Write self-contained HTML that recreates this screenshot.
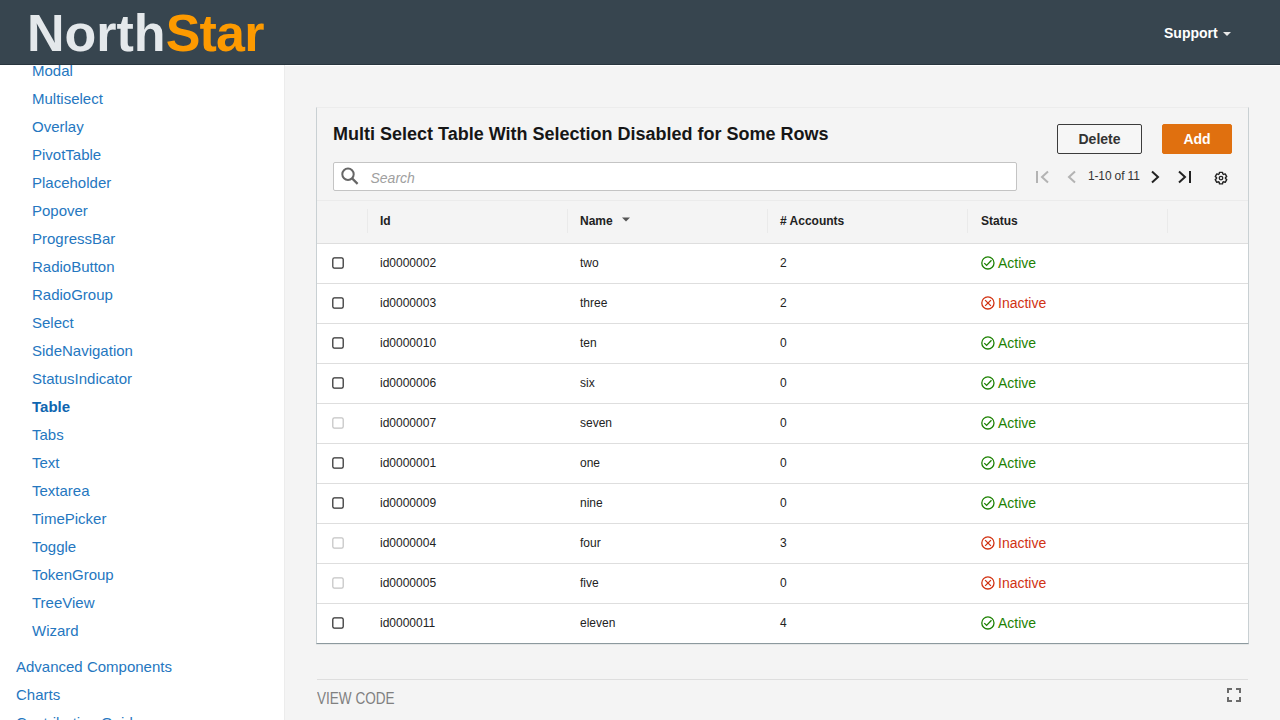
<!DOCTYPE html>
<html><head><meta charset="utf-8">
<style>
*{box-sizing:border-box;margin:0;padding:0}
html,body{width:1280px;height:720px;overflow:hidden;background:#f4f4f4;font-family:"Liberation Sans",sans-serif}
#hdr{position:absolute;left:0;top:0;width:1280px;height:65px;background:#37454f;border-bottom:1px solid #28353e}
#logo{position:absolute;left:27px;top:4px;font-size:52px;font-weight:bold;line-height:58px;white-space:nowrap;letter-spacing:0px}
#logo .n{color:#e4e8eb}#logo .s{color:#fd9a00;letter-spacing:-0.8px}
#support{position:absolute;left:1164px;top:25px;color:#fff;font-weight:bold;font-size:14px;line-height:16px}
#caret{position:absolute;left:1223px;top:32px;width:0;height:0;border-left:4px solid transparent;border-right:4px solid transparent;border-top:4px solid #e8e8e8}
#white{position:absolute;left:0;top:65px;width:1280px;height:1px;background:#fff}
#side{position:absolute;left:0;top:65px;width:285px;height:655px;background:#fff;border-right:1px solid #ececec;overflow:hidden}
.si{position:absolute;font-size:15px;line-height:18px;color:#2577bf;white-space:nowrap}
.si.b{font-weight:bold;color:#0f66b0}
#card{position:absolute;left:316px;top:107px;width:933px;height:537px;background:#f4f4f4;border-left:1px solid #c9d0d3;border-right:1px solid #c9d0d3;border-top:1px solid #ececec;border-bottom:1px solid #8c999e;box-shadow:0 1px 0 0 rgba(0,28,36,.06);overflow:hidden}
#title{position:absolute;left:16px;top:15px;font-size:18px;font-weight:bold;color:#161616;line-height:22px;white-space:nowrap}
.btn{position:absolute;top:16px;height:30px;font-size:14px;font-weight:bold;line-height:28px;text-align:center;border-radius:2px}
#del{left:740px;width:85px;border:1px solid #3c3c3c;color:#333;background:#f6f6f6}
#add{left:845px;width:70px;background:#e0700f;color:#fff;border:1px solid #e0700f}
#search{position:absolute;left:16px;top:54px;width:684px;height:29px;background:#fff;border:1px solid #c4c4c4;border-radius:2px}
#search .ph{position:absolute;left:36.5px;top:7px;font-size:14px;font-style:italic;color:#a0a0a0;line-height:16px}
#pg{position:absolute;left:771px;top:61px;font-size:12px;color:#333;line-height:14px;letter-spacing:-0.15px}
#thead{position:absolute;left:0;top:92px;width:931px;height:44px;border-top:1px solid #ebebeb;border-bottom:1px solid #dedede;background:#f4f4f4}
.th{position:absolute;top:13px;font-size:12px;font-weight:bold;color:#222;line-height:14px}
.vd{position:absolute;top:8px;width:1px;height:24px;background:#eaeaea}
.row{position:absolute;left:0;width:931px;height:40px;background:#fff;border-bottom:1px solid #dedede}
.td{position:absolute;top:12px;font-size:12px;color:#222;line-height:14px;white-space:nowrap}
.cb{position:absolute;left:15px;top:13px;width:12px;height:12px}
.cb rect{fill:#fff;stroke:#2e2e2e;stroke-width:1.25}
.cb.dis rect{stroke:#c4c4c4}
.st{position:absolute;left:664px;top:12px;font-size:14px;line-height:16px;white-space:nowrap}
.st svg{position:absolute;left:0;top:0px}
.st span{position:absolute;left:17px;top:-1px}
.act{color:#1d8102}.ina{color:#d13212}
#vline{position:absolute;left:317px;top:679px;width:931px;height:1px;background:#dedede}
#vc{position:absolute;left:317px;top:690px;font-size:16px;color:#808080;line-height:18px;transform:scaleX(0.848);transform-origin:0 0}
</style></head><body>
<div id="hdr">
  <div id="logo"><span class="n">North</span><span class="s">Star</span></div>
  <div id="support">Support</div><div id="caret"></div>
</div>
<div id="white"></div>
<div id="side">
  <div class="si" style="left:32px;top:-3px">Modal</div>
  <div class="si" style="left:32px;top:25px">Multiselect</div>
  <div class="si" style="left:32px;top:53px">Overlay</div>
  <div class="si" style="left:32px;top:81px">PivotTable</div>
  <div class="si" style="left:32px;top:109px">Placeholder</div>
  <div class="si" style="left:32px;top:137px">Popover</div>
  <div class="si" style="left:32px;top:165px">ProgressBar</div>
  <div class="si" style="left:32px;top:193px">RadioButton</div>
  <div class="si" style="left:32px;top:221px">RadioGroup</div>
  <div class="si" style="left:32px;top:249px">Select</div>
  <div class="si" style="left:32px;top:277px">SideNavigation</div>
  <div class="si" style="left:32px;top:305px">StatusIndicator</div>
  <div class="si b" style="left:32px;top:333px">Table</div>
  <div class="si" style="left:32px;top:361px">Tabs</div>
  <div class="si" style="left:32px;top:389px">Text</div>
  <div class="si" style="left:32px;top:417px">Textarea</div>
  <div class="si" style="left:32px;top:445px">TimePicker</div>
  <div class="si" style="left:32px;top:473px">Toggle</div>
  <div class="si" style="left:32px;top:501px">TokenGroup</div>
  <div class="si" style="left:32px;top:529px">TreeView</div>
  <div class="si" style="left:32px;top:557px">Wizard</div>
  <div class="si" style="left:16px;top:593px">Advanced Components</div>
  <div class="si" style="left:16px;top:621px">Charts</div>
  <div class="si" style="left:16px;top:649px">Contribution Guide</div>
</div>
<div id="card">
  <div id="title">Multi Select Table With Selection Disabled for Some Rows</div>
  <div id="del" class="btn">Delete</div>
  <div id="add" class="btn">Add</div>
  <div id="search">
    <svg style="position:absolute;left:7px;top:4px" width="19" height="19" viewBox="0 0 19 19"><circle cx="7" cy="7.3" r="5.7" fill="none" stroke="#666" stroke-width="2"/><line x1="11.1" y1="11.4" x2="16.6" y2="16.9" stroke="#666" stroke-width="2.2"/></svg>
    <div class="ph">Search</div>
  </div>
  <div id="pg">1-10 of 11</div>
  <div id="thead">
    <div class="vd" style="left:50px"></div>
    <div class="th" style="left:63px">Id</div>
    <div class="vd" style="left:250px"></div>
    <div class="th" style="left:263px">Name</div>
    <div class="vd" style="left:450px"></div>
    <div class="th" style="left:463px"># Accounts</div>
    <div class="vd" style="left:650px"></div>
    <div class="th" style="left:664px">Status</div>
    <div class="vd" style="left:850px"></div>
  </div>
  <div class="row" style="top:136px"><svg class="cb" viewBox="0 0 12 12"><rect x="0.8" y="0.8" width="10.4" height="10.4" rx="1.6"/></svg><div class="td" style="left:63px">id0000002</div><div class="td" style="left:263px">two</div><div class="td" style="left:463px">2</div><div class="st act"><svg width="14" height="14" viewBox="0 0 14 14"><circle cx="6.9" cy="6.9" r="6.1" fill="none" stroke="#1d8102" stroke-width="1.3"/><path d="M3.3 7.1L5.6 9.4L10.5 4.3" fill="none" stroke="#1d8102" stroke-width="1.3"/></svg><span>Active</span></div></div>
  <div class="row" style="top:176px"><svg class="cb" viewBox="0 0 12 12"><rect x="0.8" y="0.8" width="10.4" height="10.4" rx="1.6"/></svg><div class="td" style="left:63px">id0000003</div><div class="td" style="left:263px">three</div><div class="td" style="left:463px">2</div><div class="st ina"><svg width="14" height="14" viewBox="0 0 14 14"><circle cx="6.9" cy="6.9" r="6.1" fill="none" stroke="#d13212" stroke-width="1.3"/><path d="M4.1 4.1L9.9 9.9M9.9 4.1L4.1 9.9" fill="none" stroke="#d13212" stroke-width="1.3"/></svg><span>Inactive</span></div></div>
  <div class="row" style="top:216px"><svg class="cb" viewBox="0 0 12 12"><rect x="0.8" y="0.8" width="10.4" height="10.4" rx="1.6"/></svg><div class="td" style="left:63px">id0000010</div><div class="td" style="left:263px">ten</div><div class="td" style="left:463px">0</div><div class="st act"><svg width="14" height="14" viewBox="0 0 14 14"><circle cx="6.9" cy="6.9" r="6.1" fill="none" stroke="#1d8102" stroke-width="1.3"/><path d="M3.3 7.1L5.6 9.4L10.5 4.3" fill="none" stroke="#1d8102" stroke-width="1.3"/></svg><span>Active</span></div></div>
  <div class="row" style="top:256px"><svg class="cb" viewBox="0 0 12 12"><rect x="0.8" y="0.8" width="10.4" height="10.4" rx="1.6"/></svg><div class="td" style="left:63px">id0000006</div><div class="td" style="left:263px">six</div><div class="td" style="left:463px">0</div><div class="st act"><svg width="14" height="14" viewBox="0 0 14 14"><circle cx="6.9" cy="6.9" r="6.1" fill="none" stroke="#1d8102" stroke-width="1.3"/><path d="M3.3 7.1L5.6 9.4L10.5 4.3" fill="none" stroke="#1d8102" stroke-width="1.3"/></svg><span>Active</span></div></div>
  <div class="row" style="top:296px"><svg class="cb dis" viewBox="0 0 12 12"><rect x="0.8" y="0.8" width="10.4" height="10.4" rx="1.6"/></svg><div class="td" style="left:63px">id0000007</div><div class="td" style="left:263px">seven</div><div class="td" style="left:463px">0</div><div class="st act"><svg width="14" height="14" viewBox="0 0 14 14"><circle cx="6.9" cy="6.9" r="6.1" fill="none" stroke="#1d8102" stroke-width="1.3"/><path d="M3.3 7.1L5.6 9.4L10.5 4.3" fill="none" stroke="#1d8102" stroke-width="1.3"/></svg><span>Active</span></div></div>
  <div class="row" style="top:336px"><svg class="cb" viewBox="0 0 12 12"><rect x="0.8" y="0.8" width="10.4" height="10.4" rx="1.6"/></svg><div class="td" style="left:63px">id0000001</div><div class="td" style="left:263px">one</div><div class="td" style="left:463px">0</div><div class="st act"><svg width="14" height="14" viewBox="0 0 14 14"><circle cx="6.9" cy="6.9" r="6.1" fill="none" stroke="#1d8102" stroke-width="1.3"/><path d="M3.3 7.1L5.6 9.4L10.5 4.3" fill="none" stroke="#1d8102" stroke-width="1.3"/></svg><span>Active</span></div></div>
  <div class="row" style="top:376px"><svg class="cb" viewBox="0 0 12 12"><rect x="0.8" y="0.8" width="10.4" height="10.4" rx="1.6"/></svg><div class="td" style="left:63px">id0000009</div><div class="td" style="left:263px">nine</div><div class="td" style="left:463px">0</div><div class="st act"><svg width="14" height="14" viewBox="0 0 14 14"><circle cx="6.9" cy="6.9" r="6.1" fill="none" stroke="#1d8102" stroke-width="1.3"/><path d="M3.3 7.1L5.6 9.4L10.5 4.3" fill="none" stroke="#1d8102" stroke-width="1.3"/></svg><span>Active</span></div></div>
  <div class="row" style="top:416px"><svg class="cb dis" viewBox="0 0 12 12"><rect x="0.8" y="0.8" width="10.4" height="10.4" rx="1.6"/></svg><div class="td" style="left:63px">id0000004</div><div class="td" style="left:263px">four</div><div class="td" style="left:463px">3</div><div class="st ina"><svg width="14" height="14" viewBox="0 0 14 14"><circle cx="6.9" cy="6.9" r="6.1" fill="none" stroke="#d13212" stroke-width="1.3"/><path d="M4.1 4.1L9.9 9.9M9.9 4.1L4.1 9.9" fill="none" stroke="#d13212" stroke-width="1.3"/></svg><span>Inactive</span></div></div>
  <div class="row" style="top:456px"><svg class="cb dis" viewBox="0 0 12 12"><rect x="0.8" y="0.8" width="10.4" height="10.4" rx="1.6"/></svg><div class="td" style="left:63px">id0000005</div><div class="td" style="left:263px">five</div><div class="td" style="left:463px">0</div><div class="st ina"><svg width="14" height="14" viewBox="0 0 14 14"><circle cx="6.9" cy="6.9" r="6.1" fill="none" stroke="#d13212" stroke-width="1.3"/><path d="M4.1 4.1L9.9 9.9M9.9 4.1L4.1 9.9" fill="none" stroke="#d13212" stroke-width="1.3"/></svg><span>Inactive</span></div></div>
  <div class="row" style="top:496px"><svg class="cb" viewBox="0 0 12 12"><rect x="0.8" y="0.8" width="10.4" height="10.4" rx="1.6"/></svg><div class="td" style="left:63px">id0000011</div><div class="td" style="left:263px">eleven</div><div class="td" style="left:463px">4</div><div class="st act"><svg width="14" height="14" viewBox="0 0 14 14"><circle cx="6.9" cy="6.9" r="6.1" fill="none" stroke="#1d8102" stroke-width="1.3"/><path d="M3.3 7.1L5.6 9.4L10.5 4.3" fill="none" stroke="#1d8102" stroke-width="1.3"/></svg><span>Active</span></div></div>
</div>
<div id="vline"></div>
<div id="vc">VIEW CODE</div>
<svg id="pgicons" style="position:absolute;left:0;top:0" width="1280" height="720" viewBox="0 0 1280 720">
<g fill="none" stroke-width="2" stroke-linecap="butt" stroke-linejoin="miter">
<path d="M1037 171V183" stroke="#b3b3b3"/>
<path d="M1048 171.5L1042 177L1048 182.5" stroke="#b3b3b3"/>
<path d="M1075 171.5L1069 177L1075 182.5" stroke="#b3b3b3"/>
<path d="M1152 171.5L1158 177L1152 182.5" stroke="#222"/>
<path d="M1179 171.5L1185 177L1179 182.5" stroke="#222"/>
<path d="M1190 171V183" stroke="#222"/>
<path transform="translate(1221 178.1)" d="M-1.83 -4.11 L-1.54 -5.75 L1.54 -5.75 L1.83 -4.11 L2.65 -3.64 L4.21 -4.21 L5.75 -1.54 L4.48 -0.47 L4.48 0.47 L5.75 1.54 L4.21 4.21 L2.65 3.64 L1.83 4.11 L1.54 5.75 L-1.54 5.75 L-1.83 4.11 L-2.65 3.64 L-4.21 4.21 L-5.75 1.54 L-4.48 0.47 L-4.48 -0.47 L-5.75 -1.54 L-4.21 -4.21 L-2.65 -3.64Z" stroke="#222" stroke-width="1.4" stroke-linejoin="round"/>
<circle cx="1221" cy="178.1" r="1.8" stroke="#222" stroke-width="1.3"/>
<path d="M622 217.5H630L626 221.5Z" fill="#555" stroke="none"/>
<path d="M1228 693V689H1232M1236 689H1240V693M1240 697V701H1236M1232 701H1228V697" stroke="#6b6b6b"/>
</g></svg>
</body></html>
